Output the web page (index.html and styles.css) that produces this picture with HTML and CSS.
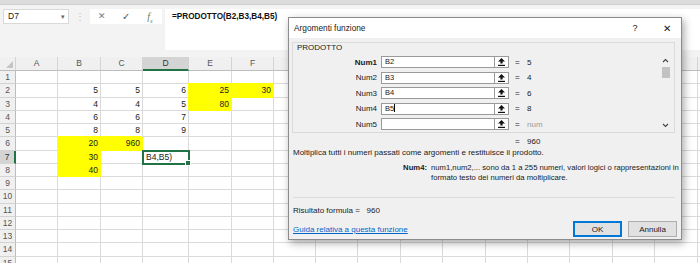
FILE: index.html
```html
<!DOCTYPE html>
<html lang="it">
<head>
  <meta charset="UTF-8">
  <meta name="viewport" content="width=device-width, initial-scale=1.0">
  <title>Argomenti funzione</title>
  <link rel="stylesheet" href="styles.css">
</head>
<body>
  <div class="top-edge"></div>

  <div class="bar">
    <div class="namebox">D7<span class="drop">&#9662;</span></div>
    <div class="grip">&#8942;</div>
    <div class="fbtns">
      <span class="cancel">&#10005;</span>
      <span class="enter">&#10003;</span>
      <span class="fx">f<sub>x</sub></span>
    </div>
    <div class="formula">=PRODOTTO(B2,B3,B4,B5)</div>
  </div>

  <div class="sheet">
    <div class="corner"></div><div class="ch">A</div><div class="ch">B</div><div class="ch">C</div><div class="ch sel">D</div><div class="ch">E</div><div class="ch">F</div><div class="ch">G</div><div class="ch rest"></div>

    <div class="rh">1</div><div></div><div></div><div></div><div></div><div></div><div></div><div></div><div class="rest"></div>
    <div class="rh">2</div><div></div><div>5</div><div>5</div><div>6</div><div class="y">25</div><div class="y">30</div><div></div><div class="rest"></div>
    <div class="rh">3</div><div></div><div>4</div><div>4</div><div>5</div><div class="y">80</div><div></div><div></div><div class="rest"></div>
    <div class="rh">4</div><div></div><div>6</div><div>6</div><div>7</div><div></div><div></div><div></div><div class="rest"></div>
    <div class="rh">5</div><div></div><div>8</div><div>8</div><div>9</div><div></div><div></div><div></div><div class="rest"></div>
    <div class="rh">6</div><div></div><div class="y">20</div><div class="y">960</div><div></div><div></div><div></div><div></div><div class="rest"></div>
    <div class="rh sel">7</div><div></div><div class="y">30</div><div></div><div class="active">B4,B5)</div><div></div><div></div><div></div><div class="rest"></div>
    <div class="rh">8</div><div></div><div class="y">40</div><div></div><div></div><div></div><div></div><div></div><div class="rest"></div>
    <div class="rh">9</div><div></div><div></div><div></div><div></div><div></div><div></div><div></div><div class="rest"></div>
    <div class="rh">10</div><div></div><div></div><div></div><div></div><div></div><div></div><div></div><div class="rest"></div>
    <div class="rh">11</div><div></div><div></div><div></div><div></div><div></div><div></div><div></div><div class="rest"></div>
    <div class="rh">12</div><div></div><div></div><div></div><div></div><div></div><div></div><div></div><div class="rest"></div>
    <div class="rh">13</div><div></div><div></div><div></div><div></div><div></div><div></div><div></div><div class="rest"></div>
    <div class="rh">14</div><div></div><div></div><div></div><div></div><div></div><div></div><div></div><div class="rest"></div>
    <div class="rh">15</div><div></div><div></div><div></div><div></div><div></div><div></div><div></div><div class="rest"></div>
  </div>

  <div class="dialog">
    <div class="dlg-title">
      <span>Argomenti funzione</span>
      <span class="help">?</span>
      <span class="close">&#10005;</span>
    </div>

    <div class="dlg-main">
      <div class="group">
        <div class="group-name">PRODOTTO</div>
        <div class="args-wrap">
          <div class="args">
            <div class="arg">
              <label class="req">Num1</label>
              <div class="field">B2</div>
              <div class="ref"><svg width="7" height="8" viewBox="0 0 7 8"><path d="M3.5 0 L7 3.5 H4.6 V5.6 H2.4 V3.5 H0 Z" fill="#111"/><rect x="0" y="6.8" width="7" height="1.2" fill="#111"/></svg></div>
              <div class="val"><span class="eq">=</span>5</div>
            </div>
            <div class="arg">
              <label>Num2</label>
              <div class="field">B3</div>
              <div class="ref"><svg width="7" height="8" viewBox="0 0 7 8"><path d="M3.5 0 L7 3.5 H4.6 V5.6 H2.4 V3.5 H0 Z" fill="#111"/><rect x="0" y="6.8" width="7" height="1.2" fill="#111"/></svg></div>
              <div class="val"><span class="eq">=</span>4</div>
            </div>
            <div class="arg">
              <label>Num3</label>
              <div class="field">B4</div>
              <div class="ref"><svg width="7" height="8" viewBox="0 0 7 8"><path d="M3.5 0 L7 3.5 H4.6 V5.6 H2.4 V3.5 H0 Z" fill="#111"/><rect x="0" y="6.8" width="7" height="1.2" fill="#111"/></svg></div>
              <div class="val"><span class="eq">=</span>6</div>
            </div>
            <div class="arg">
              <label>Num4</label>
              <div class="field">B5<span class="caret"></span></div>
              <div class="ref"><svg width="7" height="8" viewBox="0 0 7 8"><path d="M3.5 0 L7 3.5 H4.6 V5.6 H2.4 V3.5 H0 Z" fill="#111"/><rect x="0" y="6.8" width="7" height="1.2" fill="#111"/></svg></div>
              <div class="val"><span class="eq">=</span>8</div>
            </div>
            <div class="arg">
              <label>Num5</label>
              <div class="field"></div>
              <div class="ref"><svg width="7" height="8" viewBox="0 0 7 8"><path d="M3.5 0 L7 3.5 H4.6 V5.6 H2.4 V3.5 H0 Z" fill="#111"/><rect x="0" y="6.8" width="7" height="1.2" fill="#111"/></svg></div>
              <div class="val"><span class="eq">=</span><span class="muted">num</span></div>
            </div>
          </div>
          <div class="vscroll">
            <svg class="arrow" width="7" height="10" viewBox="0 0 7 10"><path d="M1 6 L3.5 3.5 L6 6" fill="none" stroke="#444" stroke-width="1.1"/></svg>
            <div class="thumb"></div>
            <div class="track"></div>
            <svg class="arrow" width="7" height="10" viewBox="0 0 7 10"><path d="M1 4 L3.5 6.5 L6 4" fill="none" stroke="#444" stroke-width="1.1"/></svg>
          </div>
        </div>
      </div>

      <div class="total"><span class="eq">=</span>960</div>
      <div class="desc">Moltiplica tutti i numeri passati come argomenti e restituisce il prodotto.</div>
      <div class="help-arg">
        <b>Num4:</b>
        <div>num1,num2,... sono da 1 a 255 numeri, valori logici o rappresentazioni in<br>formato testo dei numeri da moltiplicare.</div>
      </div>
      <div class="sep"></div>
      <div class="result">Risultato formula = &nbsp;&nbsp;960</div>
      <div class="foot">
        <a href="#" class="link">Guida relativa a questa funzione</a>
        <button class="btn primary">OK</button>
        <button class="btn">Annulla</button>
      </div>
    </div>
  </div>
</body>
</html>
```

FILE: styles.css
```css
*{
  margin: 0;
  padding: 0;
  box-sizing: border-box;
}
body{
  width: 700px;
  height: 263px;
  overflow: hidden;
  position: relative;
  background: #f3f3f3;
  font-family: "Liberation Sans", Arial, sans-serif;
  color: #222;
}

.top-edge{
  height: 5px;
  background: #dcdcdc;
  border-bottom: 1px solid #cfcfcf;
}

/* formula bar */
.bar{
  display: flex;
  align-items: flex-start;
  height: 52px;
  padding: 4px 0 0 3px;
}
.namebox{
  position: relative;
  width: 66px;
  height: 15px;
  background: #fff;
  border: 1px solid #d9d9d9;
  padding-left: 4px;
  font-size: 8.5px;
  line-height: 13px;
}
.namebox .drop{
  position: absolute;
  right: 3px;
  top: 0;
  font-size: 7px;
  color: #666;
}
.grip{
  width: 21px;
  text-align: center;
  font-size: 10px;
  line-height: 15px;
  color: #bdbdbd;
}
.fbtns{
  display: flex;
  width: 72px;
  height: 15px;
  background: #fff;
}
.fbtns span{
  width: 24px;
  text-align: center;
  line-height: 15px;
  font-size: 9px;
}
.fbtns .cancel{ color: #7a7a7a; }
.fbtns .enter{ color: #555; font-size: 10px; }
.fbtns .fx{
  font-family: "Liberation Serif", serif;
  font-style: italic;
  color: #5f7f5f;
  font-size: 10px;
}
.fbtns .fx sub{ font-size: 6px; }
.formula{
  flex: 1;
  margin-left: 3px;
  height: 41px;
  background: #fff;
  padding: 2px 7px;
  font-size: 8.2px;
  line-height: 12px;
  color: #111;
  font-weight: bold;
}

/* sheet */
.sheet{
  display: grid;
  grid-template-columns: 16px 42px 43px 42px 46px 43px 42px 42px 1fr;
  grid-template-rows: 14px repeat(15, 13.25px);
  background: #fff;
  font-size: 8.5px;
}
.sheet > div{
  border-right: 1px solid #dadada;
  border-bottom: 1px solid #dadada;
  text-align: right;
  padding-right: 2px;
  line-height: 12px;
  white-space: nowrap;
  color: #222;
}
.sheet > .rest{
  border-right: none;
  background: repeating-linear-gradient(to right, transparent 0 41.4px, #dadada 41.4px 42.4px);
}
.sheet > .ch,
.sheet > .corner{
  background: #f0f0f0;
  border-right-color: #d3d3d3;
  border-bottom-color: #bdbdbd;
  text-align: center;
  padding: 0;
  line-height: 13px;
  color: #555;
}
.sheet > .ch.rest{
  background: #f0f0f0 repeating-linear-gradient(to right, transparent 0 41.4px, #d3d3d3 41.4px 42.4px);
}
.sheet > .ch.sel{
  background: #d4d4d4;
  border-bottom: 2px solid #217346;
  line-height: 12px;
  color: #333;
}
.corner{
  position: relative;
}
.corner::after{
  content: "";
  position: absolute;
  right: 2px;
  bottom: 2px;
  border-left: 7px solid transparent;
  border-bottom: 7px solid #c4c4c4;
}
.sheet > .rh{
  background: #f0f0f0;
  border-right-color: #bdbdbd;
  border-bottom-color: #d3d3d3;
  text-align: center;
  padding: 0;
  color: #555;
}
.sheet > .rh.sel{
  background: #d4d4d4;
  border-right: 2px solid #217346;
  color: #333;
}
.sheet > .y{
  background: #ffff00;
  border-color: #ffff00;
  box-shadow: -1px -1px 0 #ffff00;
}
.sheet > .active{
  position: relative;
  text-align: left;
  padding: 0 0 0 3px;
  outline: 2px solid #217346;
  outline-offset: -1px;
  z-index: 1;
}
.sheet > .active::after{
  content: "";
  position: absolute;
  right: -3px;
  bottom: -3px;
  width: 4px;
  height: 4px;
  background: #217346;
  border: 1px solid #fff;
}

/* dialog */
.dialog{
  position: absolute;
  left: 288px;
  top: 17px;
  width: 394px;
  height: 223px;
  border: 1px solid #8c8c8c;
  background: #f0f0f0;
  box-shadow: 2px 3px 8px rgba(0,0,0,.35);
  font-size: 8px;
  color: #1a1a1a;
}
.dlg-title{
  display: flex;
  align-items: center;
  height: 20px;
  background: #fff;
  padding-left: 5px;
  font-size: 8.3px;
}
.dlg-title .help{
  margin-left: auto;
  width: 20px;
  text-align: center;
  font-size: 9px;
}
.dlg-title .close{
  width: 20px;
  margin: 0 4px 0 12px;
  text-align: center;
  font-size: 10px;
}
.dlg-main{
  padding: 4px 6px 0 3px;
}
.group{
  height: 91px;
  border: 1px solid #dadada;
}
.group-name{
  padding-left: 4px;
  line-height: 9px;
}
.args-wrap{
  display: flex;
  margin-top: 4px;
}
.args{
  flex: 1;
  display: flex;
  flex-direction: column;
  gap: 3.5px;
}
.arg{
  display: grid;
  grid-template-columns: 88px 114px 14px 1fr;
  align-items: center;
  height: 12px;
}
.arg label{
  text-align: right;
  padding-right: 4px;
}
.arg label.req{ font-weight: bold; }
.arg .field{
  height: 12px;
  background: #fff;
  border: 1px solid #9a9a9a;
  padding-left: 3px;
  font-size: 7.5px;
  line-height: 10px;
}
.caret{
  display: inline-block;
  width: 1px;
  height: 8px;
  background: #000;
  vertical-align: -1px;
}
.arg .ref{
  display: flex;
  align-items: center;
  justify-content: center;
  height: 12px;
  background: #fff;
  border: 1px solid #9a9a9a;
  border-left: none;
}
.arg .val{
  padding-left: 6px;
}
.eq{
  display: inline-block;
  width: 12px;
}
.muted{ color: #9a9a9a; }
.vscroll{
  display: flex;
  flex-direction: column;
  align-items: center;
  width: 9px;
  height: 74px;
  margin: 0 4px 0 8px;
}
.vscroll .thumb{
  width: 8px;
  height: 11px;
  margin-top: 1px;
  background: #c2c2c2;
}
.vscroll .track{ flex: 1; }
.total{
  margin-top: 4px;
  padding-left: 223px;
  line-height: 10px;
}
.desc{
  margin-top: 1px;
  padding-left: 1px;
  line-height: 10px;
}
.help-arg{
  display: grid;
  grid-template-columns: 139px 1fr;
  margin-top: 5px;
  font-size: 7.7px;
  line-height: 9.5px;
  white-space: nowrap;
}
.help-arg b{
  text-align: right;
  padding-right: 4px;
}
.sep{
  margin: 15px 0 0 1px;
  border-top: 1px solid #dcdcdc;
}
.result{
  margin-top: 8px;
  padding-left: 1px;
  line-height: 10px;
}
.foot{
  display: flex;
  align-items: center;
  gap: 6px;
  margin: 5px -2px 0 1px;
}
.link{
  margin-right: auto;
  color: #0066cc;
}
.btn{
  width: 49px;
  height: 16px;
  border: 1px solid #adadad;
  background: #e1e1e1;
  font-family: inherit;
  font-size: 8px;
  color: #1a1a1a;
}
.btn.primary{
  border-color: #0078d7;
  box-shadow: inset 0 0 0 1px #0078d7;
}
```
